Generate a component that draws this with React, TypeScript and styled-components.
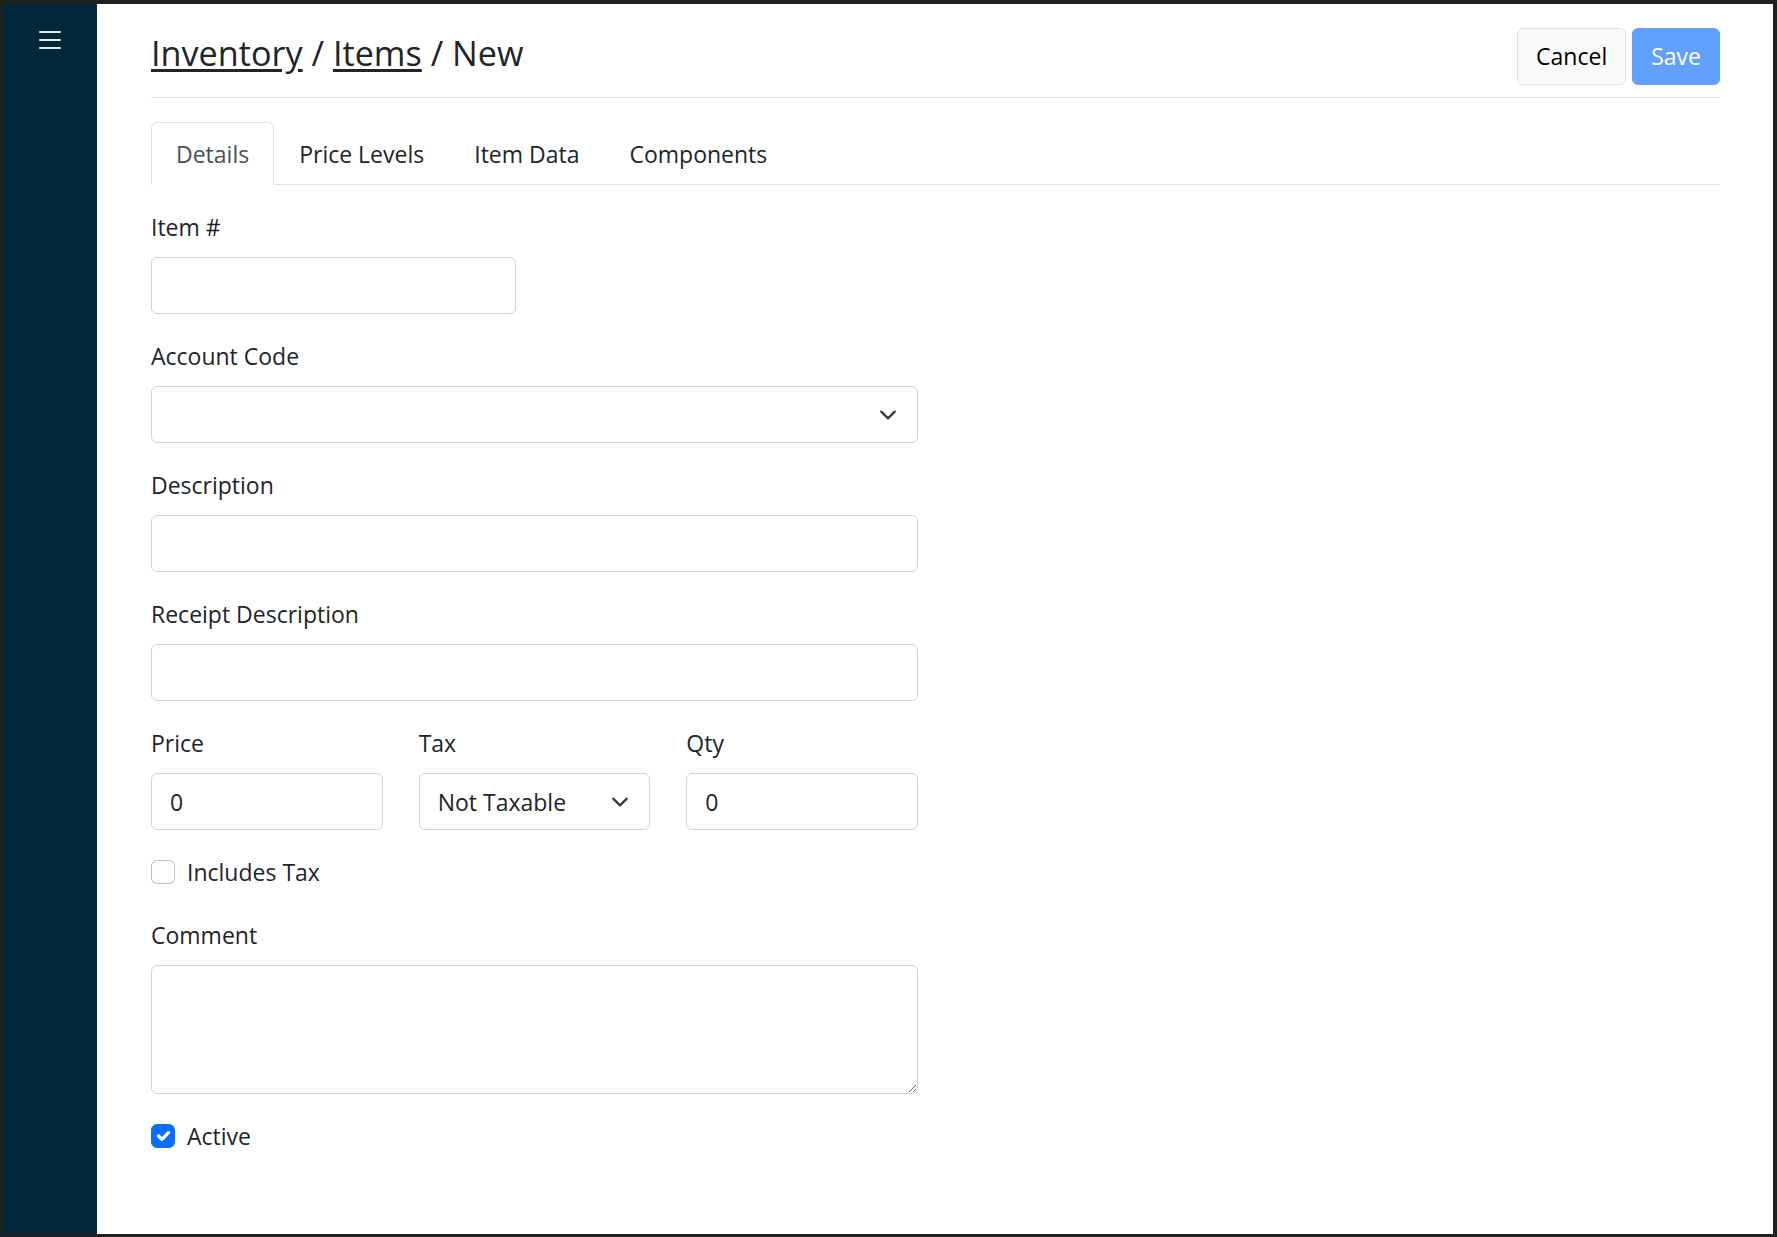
import React from "react"
import styled, { createGlobalStyle, css } from "styled-components"

const GlobalStyle = createGlobalStyle`
  html, body {
    margin: 0;
    height: 100%;
  }
  body {
    background: #202020;
    font-family: "Open Sans", "Noto Sans", sans-serif;
    color: #212529;
  }
  * {
    box-sizing: border-box;
  }
`

const Frame = styled.div`
  display: flex;
  height: 100vh;
  border-style: solid;
  border-color: #202020;
  border-width: 4px 4px 3px 3px;
`

const Sidebar = styled.nav`
  width: 94px;
  flex-shrink: 0;
  background: #02263a;
  display: flex;
  justify-content: center;
  align-items: flex-start;
  padding-top: 20px;
`

const MenuButton = styled.button`
  background: none;
  border: 0;
  padding: 0;
  width: 32px;
  height: 32px;
  color: #e4e6e8;
  cursor: pointer;
  svg {
    display: block;
  }
`

const Main = styled.main`
  flex: 1;
  background: #fff;
  padding: 0 53px 0 54px;
`

const Header = styled.header`
  display: flex;
  justify-content: space-between;
  align-items: flex-start;
  padding: 24px 0 12px;
  border-bottom: 1px solid #dee2e6;
`

const Title = styled.h1`
  margin: 0;
  padding-top: 3px;
  font-size: 34.2px;
  font-weight: 400;
  line-height: 43px;
  color: #212529;

  a {
    color: inherit;
    text-decoration: underline;
    text-underline-offset: 3px;
  }
`

const Actions = styled.div`
  display: flex;
  gap: 6px;
`

const Button = styled.button<{ $variant: "light" | "primary" }>`
  font-family: inherit;
  font-size: 23px;
  line-height: 36px;
  padding: 9px 18px 10px;
  border: 1px solid;
  border-radius: 6px;
  cursor: pointer;
  ${(p) =>
    p.$variant === "light"
      ? css`
          background: #f8f9fa;
          border-color: #dee2e6;
          color: #000;
        `
      : css`
          background: #0d6efd;
          border-color: #0d6efd;
          color: #fff;
          opacity: 0.65;
          cursor: default;
        `}
`

const Tabs = styled.ul`
  display: flex;
  list-style: none;
  margin: 24px 0 0;
  padding: 0;
  border-bottom: 1px solid #dee2e6;
`

const Tab = styled.li<{ $active?: boolean }>`
  margin-bottom: -1px;
  padding: 13px 24px 12px;
  font-size: 23px;
  line-height: 36px;
  border: 1px solid transparent;
  border-radius: 6px 6px 0 0;
  color: #212529;
  cursor: pointer;
  ${(p) =>
    p.$active &&
    css`
      color: #495057;
      background: #fff;
      border-color: #dee2e6 #dee2e6 #fff;
    `}
`

const Form = styled.form`
  width: 767px;
  padding-top: 24px;
`

const Field = styled.div<{ $width?: string }>`
  margin-bottom: 24px;
  width: ${(p) => p.$width || "100%"};
`

const Row = styled.div`
  display: grid;
  grid-template-columns: repeat(3, 1fr);
  column-gap: 36px;
`

const Label = styled.label`
  display: block;
  margin-bottom: 12px;
  font-size: 23px;
  line-height: 36px;
`

const control = css`
  display: block;
  width: 100%;
  font-family: inherit;
  font-size: 23px;
  line-height: 36px;
  color: #212529;
  background: #fff;
  border: 1px solid #ced4da;
  border-radius: 6px;
  padding: 9px 18px;
  outline: none;
`

const Input = styled.input`
  ${control};
  height: 57px;
`

const TextArea = styled.textarea`
  ${control};
  height: 129px;
  resize: vertical;
`

const SelectWrap = styled.div`
  position: relative;
`

const Select = styled.select`
  ${control};
  height: 57px;
  appearance: none;
  padding-right: 54px;
`

const Chevron = styled.svg`
  position: absolute;
  right: 18px;
  top: 50%;
  width: 24px;
  height: 18px;
  transform: translateY(-50%);
  pointer-events: none;
`

const CheckRow = styled.label<{ $gap?: number }>`
  display: flex;
  align-items: center;
  gap: 12px;
  min-height: 36px;
  margin-bottom: ${(p) => p.$gap ?? 27}px;
  font-size: 23px;
  line-height: 36px;
  cursor: pointer;
`

const CheckBox = styled.span<{ $checked?: boolean }>`
  width: 24px;
  height: 24px;
  flex-shrink: 0;
  border-radius: 6px;
  border: 1px solid ${(p) => (p.$checked ? "#0d6efd" : "rgba(0,0,0,0.25)")};
  background: ${(p) => (p.$checked ? "#0d6efd" : "#fff")};
  display: flex;
  align-items: center;
  justify-content: center;
  svg {
    display: block;
  }
`

const ChevronIcon = () => (
  <Chevron viewBox="0 0 16 16">
    <path
      d="m2 5 6 6 6-6"
      fill="none"
      stroke="#343a40"
      strokeWidth="2"
      strokeLinecap="round"
      strokeLinejoin="round"
    />
  </Chevron>
)

const Check = ({ checked, label }: { checked?: boolean; label: string }) => (
  <CheckRow>
    <CheckBox $checked={checked}>
      {checked && (
        <svg width="22" height="22" viewBox="0 0 20 20">
          <path
            d="m6 10 3 3 6-6"
            fill="none"
            stroke="#fff"
            strokeWidth="3"
            strokeLinecap="round"
            strokeLinejoin="round"
          />
        </svg>
      )}
    </CheckBox>
    {label}
  </CheckRow>
)

export default function App() {
  return (
    <>
      <GlobalStyle />
      <Frame>
        <Sidebar>
          <MenuButton aria-label="Menu">
            <svg width="32" height="32" viewBox="0 0 16 16" fill="currentColor">
              <path d="M2.5 12a.5.5 0 0 1 .5-.5h10a.5.5 0 0 1 0 1H3a.5.5 0 0 1-.5-.5m0-4a.5.5 0 0 1 .5-.5h10a.5.5 0 0 1 0 1H3a.5.5 0 0 1-.5-.5m0-4a.5.5 0 0 1 .5-.5h10a.5.5 0 0 1 0 1H3a.5.5 0 0 1-.5-.5" />
            </svg>
          </MenuButton>
        </Sidebar>
        <Main>
          <Header>
            <Title>
              <a href="#">Inventory</a> / <a href="#">Items</a> / New
            </Title>
            <Actions>
              <Button $variant="light">Cancel</Button>
              <Button $variant="primary" disabled>
                Save
              </Button>
            </Actions>
          </Header>

          <Tabs>
            <Tab $active>Details</Tab>
            <Tab>Price Levels</Tab>
            <Tab>Item Data</Tab>
            <Tab>Components</Tab>
          </Tabs>

          <Form onSubmit={(e) => e.preventDefault()}>
            <Field $width="365px">
              <Label>Item #</Label>
              <Input type="text" />
            </Field>
            <Field>
              <Label>Account Code</Label>
              <SelectWrap>
                <Select defaultValue="">
                  <option value=""></option>
                </Select>
                <ChevronIcon />
              </SelectWrap>
            </Field>
            <Field>
              <Label>Description</Label>
              <Input type="text" />
            </Field>
            <Field>
              <Label>Receipt Description</Label>
              <Input type="text" />
            </Field>
            <Row>
              <Field>
                <Label>Price</Label>
                <Input type="text" defaultValue="0" />
              </Field>
              <Field>
                <Label>Tax</Label>
                <SelectWrap>
                  <Select defaultValue="none">
                    <option value="none">Not Taxable</option>
                  </Select>
                  <ChevronIcon />
                </SelectWrap>
              </Field>
              <Field>
                <Label>Qty</Label>
                <Input type="text" defaultValue="0" />
              </Field>
            </Row>
            <Check label="Includes Tax" />
            <Field>
              <Label>Comment</Label>
              <TextArea />
            </Field>
            <Check checked label="Active" />
          </Form>
        </Main>
      </Frame>
    </>
  )
}
